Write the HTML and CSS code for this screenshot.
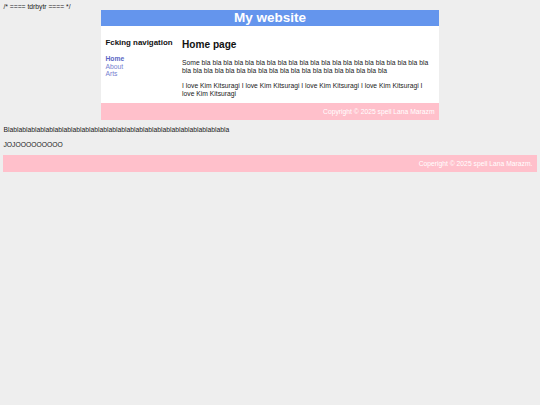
FILE: index.html
```html
<!DOCTYPE html>
<html>
<head>
<meta charset="utf-8">
<title>My website</title>
<link rel="stylesheet" href="styles.css">
</head>
<body>
/* ==== tdrbytr ==== */
<div class="container">
  <header class="site-header">
    <h1 class="site-title">My website</h1>
  </header>
  <div class="content">
    <nav class="side-nav">
      <h3 class="nav-title">Fcking navigation</h3>
      <ul class="nav-list">
        <li><a class="nav-link current" href="#">Home</a></li>
        <li><a class="nav-link" href="#">About</a></li>
        <li><a class="nav-link" href="#">Arts</a></li>
      </ul>
    </nav>
    <main class="main">
      <h2 class="page-title">Home page</h2>
      <p class="text">Some bla bla bla bla bla bla bla bla bla bla bla bla bla bla bla bla bla bla bla bla bla bla bla bla bla bla bla bla bla bla bla bla bla bla bla bla bla bla bla bla</p>
      <p class="text">I love Kim Kitsuragi I love Kim Kitsuragi I love Kim Kitsuragi I love Kim Kitsuragi I love Kim Kitsuragi</p>
    </main>
  </div>
  <footer class="footer">
    <p class="footer-text">Copyright © 2025 spell Lana Marazm</p>
  </footer>
</div>
<p class="text">Blablablablablablablablablablablablablablablablablablablablablablablablabla</p>
<p class="text">JOJOOOOOOOOO</p>
<footer class="footer">
  <p class="footer-text">Coperight © 2025 spell Lana Marazm.</p>
</footer>
</body>
</html>
```

FILE: styles.css
```css
html, body {
  margin: 0;
  padding: 0;
}
body {
  margin: 3.4px;
  background: #eeeeee;
  font-family: "Liberation Sans", Arial, sans-serif;
  font-size: 6.75px;
  color: #1a1a1a;
}
.container {
  width: 337.5px;
  margin: 0 auto;
  background: #ffffff;
}
.site-header {
  background: #6495ed;
}
.site-title {
  margin: 0;
  font-size: 13.5px;
  font-weight: bold;
  color: #ffffff;
  text-align: center;
  line-height: 16px;
}
.content {
  display: flex;
}
.side-nav {
  width: 76.6px;
  flex: none;
  padding: 3.6px 4.2px 0;
  box-sizing: border-box;
}
.nav-title {
  font-size: 7.9px;
  margin: 7.9px 0;
  color: #111;
}
.nav-list {
  list-style: none;
  margin: 0;
  padding: 0;
}
.nav-list li {
  line-height: 7.8px;
}
.nav-link {
  color: #7580d0;
  text-decoration: none;
}
.nav-link.current {
  font-weight: bold;
  color: #5a66c4;
}
.main {
  flex: 1;
  padding: 4.4px 4.2px 0;
}
.page-title {
  font-size: 10.1px;
  margin: 8.4px 0 9px;
  color: #111;
}
.text {
  margin: 6.75px 0;
  line-height: 7.8px;
}
.main .text + .text {
  margin-top: 7.2px;
  margin-bottom: 5.8px;
}
.footer {
  background: #ffc0cb;
  padding: 4.2px;
}
.footer-text {
  margin: 0;
  text-align: right;
  color: #ffffff;
  line-height: 7.8px;
}
```
